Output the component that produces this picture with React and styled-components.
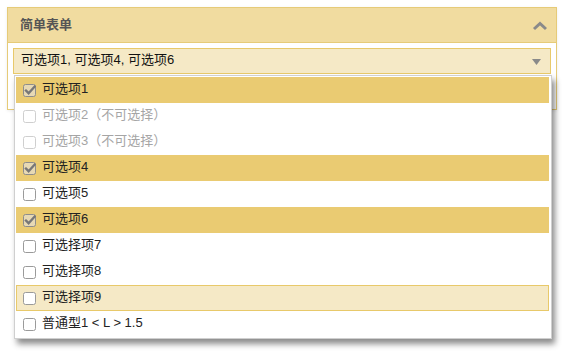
import React from "react";
import styled, { createGlobalStyle } from "styled-components";

const GlobalStyle = createGlobalStyle`
  html, body {
    margin: 0;
    padding: 0;
    background: #fff;
    font-family: "Liberation Sans", "Noto Sans CJK SC", Arial, sans-serif;
    font-size: 13px;
  }
`;

const items = [
  { label: "可选项1", checked: true },
  { label: "可选项2（不可选择）", disabled: true },
  { label: "可选项3（不可选择）", disabled: true },
  { label: "可选项4", checked: true },
  { label: "可选项5" },
  { label: "可选项6", checked: true },
  { label: "可选择项7" },
  { label: "可选择项8" },
  { label: "可选择项9", hover: true },
  { label: "普通型1 < L > 1.5" },
];

const CheckBox = ({ checked, disabled }) => (
  <Box viewBox="0 0 13 13" width="13" height="13">
    <rect
      x="0.5"
      y="0.5"
      width="12"
      height="12"
      rx="2"
      fill={checked ? "#e7d9b4" : "#fff"}
      stroke={disabled ? "#cfcfcf" : checked ? "#8d8d8d" : "#9a9a9a"}
    />
    {checked && (
      <path
        d="M3 6.6 L5.6 9.2 L11.6 2.6"
        fill="none"
        stroke="#777"
        strokeWidth="2.4"
        strokeLinecap="square"
      />
    )}
  </Box>
);

const App = () => (
  <Page>
    <GlobalStyle />
    <Panel>
      <Header>
        <Title>简单表单</Title>
        <svg width="16" height="10" viewBox="0 0 16 10">
          <path
            d="M2 8 L8 2.5 L14 8"
            fill="none"
            stroke="#8a8a8a"
            strokeWidth="3"
          />
        </svg>
      </Header>
      <Body>
        <SelectWrap>
          <Select>
            <Label>可选项1, 可选项4, 可选项6</Label>
            <svg width="9" height="6" viewBox="0 0 9 6">
              <path d="M0 0 H9 L4.5 6 Z" fill="#8a8a8a" />
            </svg>
          </Select>
          <Dropdown>
            {items.map((it) => (
              <Item
                key={it.label}
                $checked={it.checked}
                $disabled={it.disabled}
                $hover={it.hover}
              >
                <CheckBox checked={it.checked} disabled={it.disabled} />
                <Label>{it.label}</Label>
              </Item>
            ))}
          </Dropdown>
        </SelectWrap>
      </Body>
    </Panel>
  </Page>
);

export default App;

const Page = styled.div`
  box-sizing: border-box;
  min-height: 364px;
  padding: 7px;
  width: 564px;
`;

const Panel = styled.div`
  border: 1px solid #e6cb78;
  background: #fff;
  box-shadow: 0 1px 3px rgba(0, 0, 0, 0.08);
`;

const Header = styled.div`
  display: flex;
  align-items: center;
  justify-content: space-between;
  height: 34px;
  padding: 0 8px 0 12px;
  background: #f1dca0;
  border-bottom: 1px solid #e6cb78;

  svg {
    margin-top: 2px;
  }
`;

const Title = styled.h3`
  margin: 0;
  padding-bottom: 3px;
  font-size: 13px;
  font-weight: bold;
  color: #555;
`;

const Body = styled.div`
  padding: 5px 5px 35px;
`;

const SelectWrap = styled.div`
  position: relative;
`;

const Label = styled.span`
  line-height: 1;
  padding-bottom: 3px;
`;

const Select = styled.div`
  display: flex;
  align-items: center;
  justify-content: space-between;
  height: 24px;
  padding: 0 9px 0 7px;
  background: #f5e9c6;
  border: 1px solid #e8c96a;
  color: #111;

  svg {
    margin-top: 1px;
  }
`;

const Dropdown = styled.div`
  position: absolute;
  top: 27px;
  left: 1px;
  right: -1px;
  padding: 1px 2px 1px 1px;
  background: #fff;
  border: 1px solid #cfcfcf;
  box-shadow: 3px 5px 6px rgba(0, 0, 0, 0.45);
  z-index: 2;
`;

const Item = styled.div`
  display: flex;
  align-items: center;
  gap: 6px;
  box-sizing: border-box;
  height: 26px;
  padding: 0 7px 0 6px;
  color: ${({ $disabled }) => ($disabled ? "#a5a5a5" : "#222")};
  background: ${({ $checked, $hover }) =>
    $checked ? "#eacb72" : $hover ? "#f5e9c6" : "#fff"};
  border: 1px solid
    ${({ $hover }) => ($hover ? "#e8c96a" : "transparent")};
`;

const Box = styled.svg`
  flex: none;
`;
